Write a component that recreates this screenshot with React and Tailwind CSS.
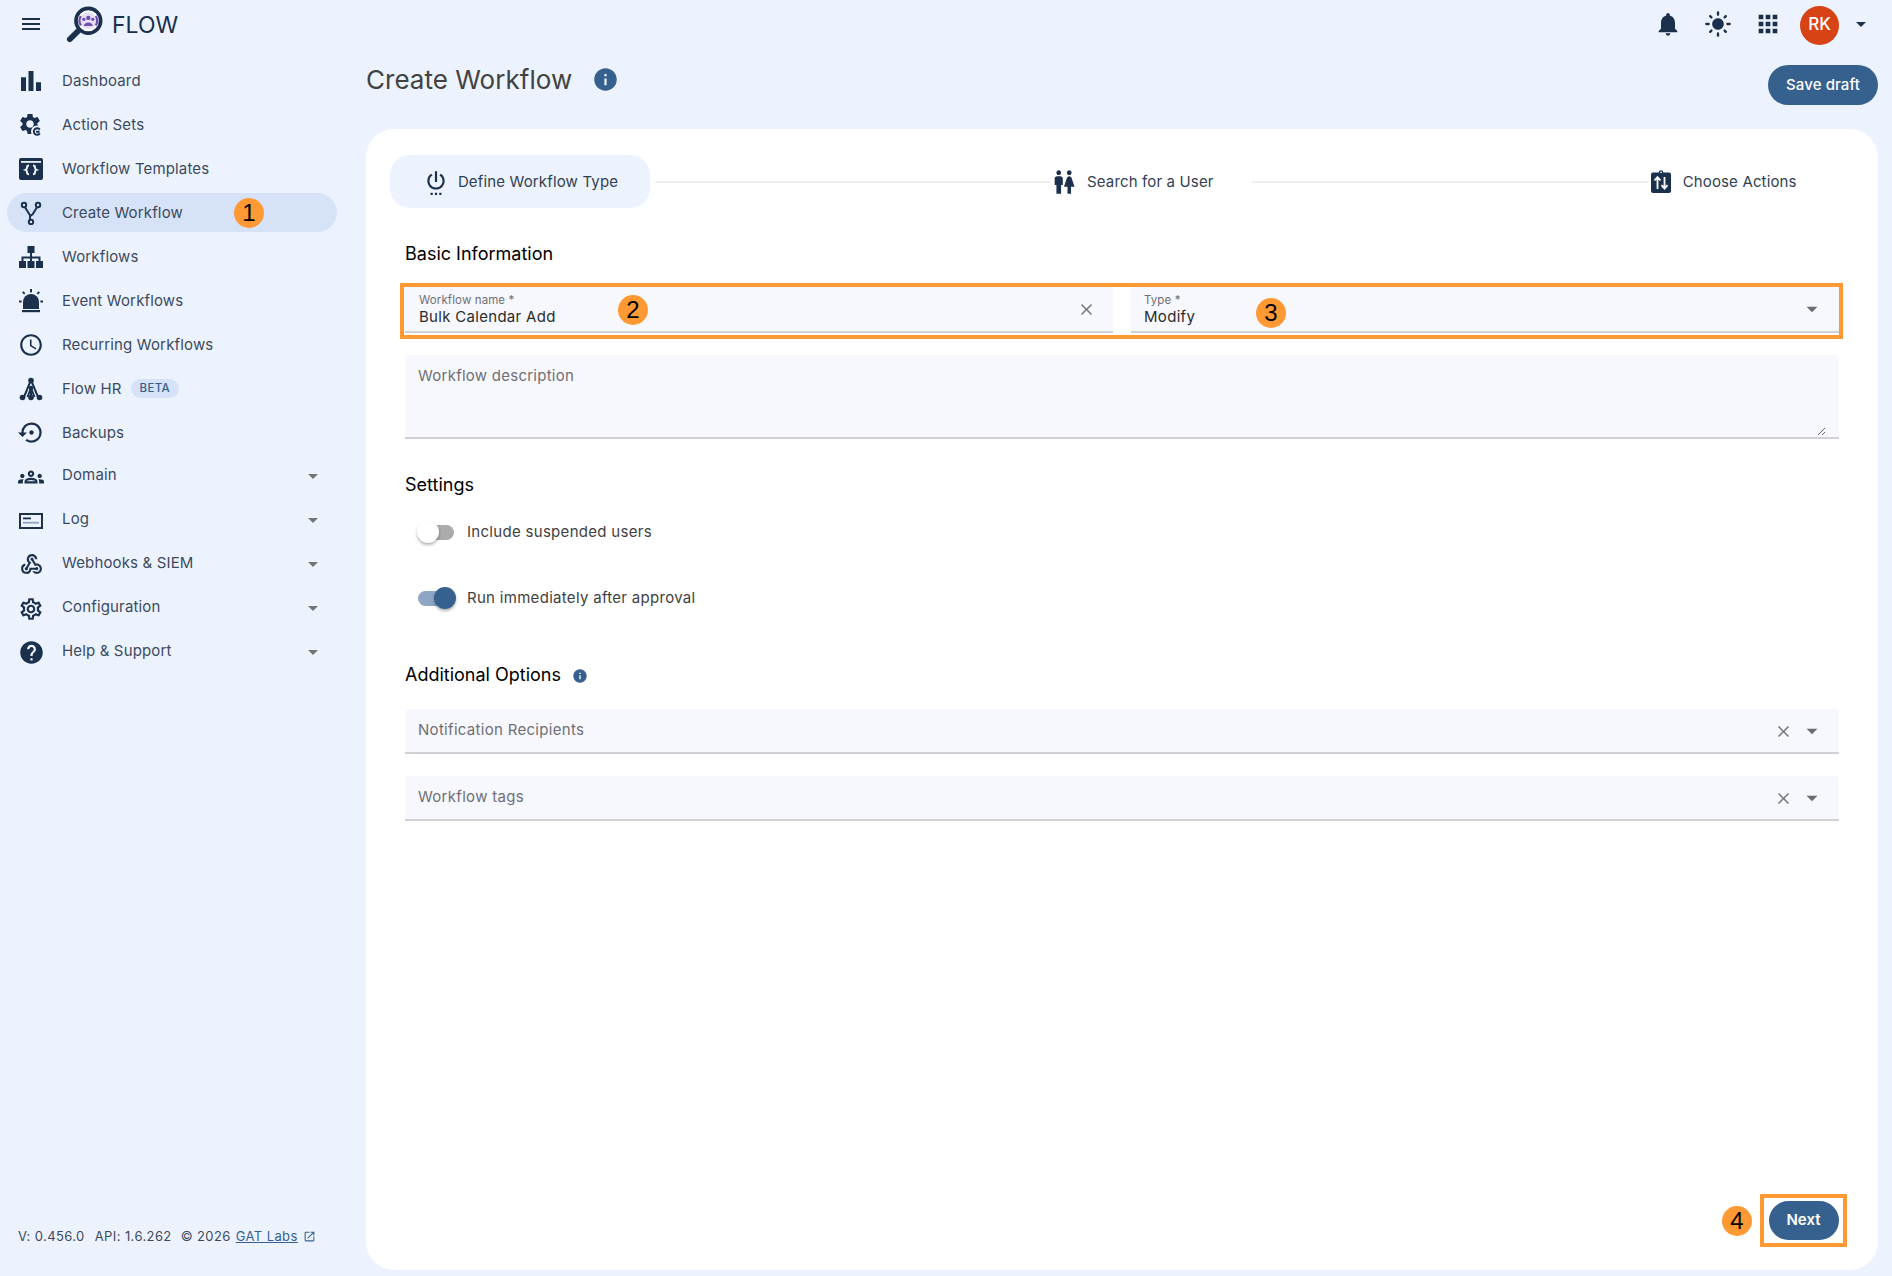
import React from "react";
import {
  MdMenu, MdBarChart, MdAccessTime, MdOutlineSettingsBackupRestore, MdOutlineGroups, MdOutlineWebhook,
  MdOutlineSettings, MdHelp, MdArrowDropDown, MdNotifications, MdLightMode, MdApps, MdInfo, MdSettingsPower,
  MdWc, MdClose, MdOpenInNew,
} from "react-icons/md";

const NAVY = "#1a304d";

function ActionSetsIcon(props) {
  return (
    <svg viewBox="0 0 24 24" {...props}>
      <g transform="translate(-1.6 -1.6) scale(1.05)"><path fill="currentColor" d="M19.14 12.94c.04-.3.06-.61.06-.94 0-.32-.02-.64-.07-.94l2.03-1.58c.18-.14.23-.41.12-.61l-1.92-3.32c-.12-.22-.37-.29-.59-.22l-2.39.96c-.5-.38-1.03-.7-1.62-.94l-.36-2.54c-.04-.24-.24-.41-.48-.41h-3.84c-.24 0-.43.17-.47.41l-.36 2.54c-.59.24-1.13.57-1.62.94l-2.39-.96c-.22-.08-.47 0-.59.22L2.74 8.87c-.12.21-.08.47.12.61l2.03 1.58c-.05.3-.09.63-.09.94s.02.64.07.94l-2.03 1.58c-.18.14-.23.41-.12.61l1.92 3.32c.12.22.37.29.59.22l2.39-.96c.5.38 1.03.7 1.62.94l.36 2.54c.05.24.24.41.48.41h3.84c.24 0 .44-.17.47-.41l.36-2.54c.59-.24 1.13-.56 1.62-.94l2.39.96c.22.08.47 0 .59-.22l1.92-3.32c.12-.22.07-.47-.12-.61l-2.01-1.58zM12 15.6c-1.98 0-3.6-1.62-3.6-3.6s1.62-3.6 3.6-3.6 3.6 1.62 3.6 3.6-1.62 3.6-3.6 3.6z" /></g>
      <circle cx="18" cy="18.5" r="6" fill="#ecf3fe" />
      <path d="M20.8 16.6a3.3 3.3 0 1 0 0 3.8M17 18.8h3.6" fill="none" stroke="currentColor" strokeWidth="1.9" />
    </svg>
  );
}

function TemplatesIcon(props) {
  return (
    <svg viewBox="0 0 24 24" {...props}>
      <rect x="0" y="1" width="24" height="22" rx="2" fill="currentColor" />
      <rect x="2" y="4" width="20" height="1.8" fill="#ecf3fe" />
      <path d="M10 8.5c-1.8 0-2 .8-2 2 0 1.3-.4 1.9-1.6 2.4 1.2.5 1.6 1.1 1.6 2.4 0 1.2.2 2 2 2M14 8.5c1.8 0 2 .8 2 2 0 1.3.4 1.9 1.6 2.4-1.2.5-1.6 1.1-1.6 2.4 0 1.2-.2 2-2 2" fill="none" stroke="#ecf3fe" strokeWidth="2" />
    </svg>
  );
}

function ForkIcon(props) {
  return (
    <svg viewBox="0 0 24 24" fill="none" stroke="currentColor" strokeWidth="2" {...props}>
      <circle cx="5" cy="4" r="2.2" />
      <circle cx="19" cy="4" r="2.2" />
      <circle cx="12" cy="21" r="2.2" />
      <path d="M6 6.2 11 14.2V18.8M18 6.2 13 14.2" />
      <path d="M11 14.2h2" />
    </svg>
  );
}

function SitemapIcon(props) {
  return (
    <svg viewBox="0 0 24 24" fill="currentColor" {...props}>
      <rect x="8.5" y="1" width="7" height="7" />
      <rect x="0" y="16" width="7" height="7" />
      <rect x="8.5" y="16" width="7" height="7" />
      <rect x="17" y="16" width="7" height="7" />
      <path d="M11 8h2v3.5h8.5V16h-2v-2.5H13V16h-2v-2.5H4.5V16h-2v-4.5H11z" />
    </svg>
  );
}

function SirenIcon(props) {
  return (
    <svg viewBox="0 0 24 24" fill="currentColor" {...props}>
      <path d="M4 20v-7a8 8 0 0 1 16 0v7z" />
      <rect x="3" y="21" width="18" height="2.2" />
      <rect x="11" y="0" width="2" height="3.4" />
      <rect x="0" y="11.5" width="2.6" height="2" />
      <rect x="21.4" y="11.5" width="2.6" height="2" />
      <path d="M3 3.6 4.4 2.2l2 2L5 5.6zM21 3.6 19.6 2.2l-2 2L19 5.6z" />
    </svg>
  );
}

function TreeIcon(props) {
  return (
    <svg viewBox="0 0 24 24" {...props}>
      <path d="M12 3 5 20M12 3l7 17M12 11v9M12 11l-3.5 9M12 11l3.5 9" fill="none" stroke="currentColor" strokeWidth="2" />
      <circle cx="12" cy="3.5" r="2.8" fill="currentColor" />
      <circle cx="12" cy="11" r="2.2" fill="currentColor" />
      <circle cx="3.5" cy="20.5" r="2.8" fill="currentColor" />
      <circle cx="12" cy="20.5" r="2.8" fill="currentColor" />
      <circle cx="20.5" cy="20.5" r="2.8" fill="currentColor" />
    </svg>
  );
}

function LogIcon(props) {
  return (
    <svg viewBox="0 0 24 24" {...props}>
      <rect x="1" y="5" width="22" height="14" fill="none" stroke="currentColor" strokeWidth="2" />
      <rect x="4" y="8.5" width="8" height="1.8" fill="currentColor" />
      <rect x="4" y="12.8" width="16" height="1.8" fill="#8fa3bb" />
    </svg>
  );
}

function ClipboardSwapIcon(props) {
  return (
    <svg viewBox="0 0 24 24" {...props}>
      <rect x="2" y="2.5" width="20" height="20.5" rx="2" fill="currentColor" />
      <circle cx="12" cy="2.4" r="2.2" fill="currentColor" />
      <circle cx="12" cy="2.4" r="0.8" fill="#fff" />
      <path d="M8.5 19V7.5M5.5 10.5l3-3.4 3 3.4M15.5 7v11.5M12.5 15.2l3 3.4 3-3.4" fill="none" stroke="#fff" strokeWidth="1.8" />
    </svg>
  );
}

function FlowLogo() {
  return (
    <svg viewBox="0 0 40 40" className="w-[38px] h-[38px] shrink-0">
      <path d="M12.5 26.5 4 35" stroke={NAVY} strokeWidth="6" strokeLinecap="round" />
      <circle cx="23.5" cy="15.5" r="13" fill="#fff" stroke={NAVY} strokeWidth="3.8" />
      <circle cx="23.5" cy="15.5" r="8.8" fill="#e6dff5" />
      <path d="M15.6 10.5a9.8 9.8 0 0 0 0 10M31.4 10.5a9.8 9.8 0 0 1 0 10" stroke="#6d4fb0" strokeWidth="2.4" fill="none" />
      <circle cx="23.5" cy="12.5" r="2.3" fill="#6d4fb0" />
      <circle cx="18.8" cy="14" r="1.7" fill="#6d4fb0" />
      <circle cx="28.2" cy="14" r="1.7" fill="#6d4fb0" />
      <path d="M18.8 21c0-5 9.4-5 9.4 0z" fill="#6d4fb0" />
    </svg>
  );
}

function Badge({ n, className = "" }) {
  return (
    <span className={`w-[30px] h-[30px] rounded-full bg-[#ff9933] text-black text-[24px] leading-none flex items-center justify-center font-['Liberation_Sans',sans-serif] shrink-0 ${className}`}>
      {n}
    </span>
  );
}

const navItems = [
  { label: "Dashboard", icon: MdBarChart, size: 30 },
  { label: "Action Sets", icon: ActionSetsIcon },
  { label: "Workflow Templates", icon: TemplatesIcon },
  { label: "Create Workflow", icon: ForkIcon, active: true },
  { label: "Workflows", icon: SitemapIcon },
  { label: "Event Workflows", icon: SirenIcon },
  { label: "Recurring Workflows", icon: MdAccessTime, size: 26 },
  { label: "Flow HR", icon: TreeIcon, beta: true },
  { label: "Backups", icon: MdOutlineSettingsBackupRestore, size: 27 },
  { label: "Domain", icon: MdOutlineGroups, size: 26, caret: true },
  { label: "Log", icon: LogIcon, caret: true },
  { label: "Webhooks & SIEM", icon: MdOutlineWebhook, size: 25, caret: true },
  { label: "Configuration", icon: MdOutlineSettings, size: 26, caret: true },
  { label: "Help & Support", icon: MdHelp, size: 27, caret: true },
];

function NavRow({ item }) {
  const Icon = item.icon;
  const size = item.size || 24;
  return (
    <div className={`relative h-[39px] ml-[7px] w-[330px] flex items-center rounded-full ${item.active ? "bg-[#d6e2f8]" : ""}`}>
      <span className="w-[48px] flex items-center justify-center text-[#1a304d] shrink-0">
        <Icon style={{ width: size, height: size }} className="text-[#1a304d]" />
      </span>
      <span className={`ml-[7px] text-[15px] tracking-[0.15px] text-[#3c4a5e] ${item.caret ? "-mt-[2px]" : "mt-[2px]"}`}>{item.label}</span>
      {item.beta && (
        <span className="ml-[9px] px-[9px] h-[19px] rounded-full bg-[#d6e2f8] text-[11.5px] font-medium tracking-[0.3px] text-[#36618e] flex items-center">BETA</span>
      )}
      {item.active && <Badge n="1" className="absolute left-[227px] top-[5px]" />}
      {item.caret && <MdArrowDropDown className="absolute right-[12px] top-[7px] w-[24px] h-[24px] text-[#757575]" />}
    </div>
  );
}

function Step({ icon: Icon, label, size = 24, iconClass = "" }) {
  return (
    <div className="flex items-center gap-[10px] shrink-0">
      <Icon style={{ width: size, height: size }} className={`text-[#1a304d] ${iconClass}`} />
      <span className="mt-[2px] text-[15px] tracking-[0.15px] text-[#303f52]">{label}</span>
    </div>
  );
}

function SectionTitle({ children }) {
  return <h2 className="text-[18px] leading-[24px] text-black">{children}</h2>;
}

function Toggle({ on, label }) {
  return (
    <div className="flex items-center h-[40px] ml-[12px]">
      <span className="relative w-[38px] h-[22px] flex items-center">
        <span className={`ml-[1px] w-[36px] h-[15px] rounded-full ${on ? "bg-[#8ea6c3]" : "bg-[#ababab]"}`} />
        <span className={`absolute top-0 w-[22px] h-[22px] rounded-full shadow-[0_2px_3px_rgba(0,0,0,0.3)] ${on ? "bg-[#36618e] left-[17px]" : "bg-white left-0"}`} />
      </span>
      <span className="ml-[12px] text-[15px] tracking-[0.3px] text-[#3f3f3f]">{label}</span>
    </div>
  );
}

function SelectField({ label }) {
  return (
    <div className="h-[45px] bg-[#f7f8fe] rounded-t-[4px] border-b-2 border-[#d0d0d6] flex items-center pl-[13px] pr-[14px]">
      <span className="flex-1 text-[15px] tracking-[0.3px] text-[#6f6f75]">{label}</span>
      <MdClose className="mt-[2px] w-[19px] h-[19px] text-[#77777d]" />
      <MdArrowDropDown className="ml-[6px] mt-[1px] w-[26px] h-[26px] text-[#6b6b70]" />
    </div>
  );
}

export default function App() {
  return (
    <div className="h-screen overflow-hidden bg-[#ecf3fe] flex flex-col font-['Inter',sans-serif]">
      {/* top bar */}
      <header className="h-[48px] shrink-0 flex items-center pl-[19px] pr-[19px]">
        <MdMenu className="w-[24px] h-[24px] text-[#1a304d]" />
        <span className="ml-[23px] mt-[1px]"><FlowLogo /></span>
        <span className="ml-[8px] mt-[2px] text-[23px] text-[#1a304d]">FLOW</span>
        <div className="ml-auto flex items-center">
          <MdNotifications className="w-[28px] h-[28px] text-[#1a304d]" />
          <MdLightMode className="ml-[22px] w-[28px] h-[28px] text-[#1a304d]" />
          <MdApps className="ml-[22px] w-[28px] h-[28px] text-[#1a304d]" />
          <span className="ml-[18px] mt-[2px] w-[39px] h-[39px] rounded-full bg-[#d84315] text-white text-[17px] font-medium flex items-center justify-center">RK</span>
          <MdArrowDropDown className="ml-[10px] w-[24px] h-[24px] text-[#1a304d]" />
        </div>
      </header>

      <div className="flex-1 flex min-h-0">
        {/* sidebar */}
        <aside className="w-[366px] shrink-0 flex flex-col pt-[13px]">
          <nav className="flex flex-col gap-[5px]">
            {navItems.map((item) => (
              <NavRow key={item.label} item={item} />
            ))}
          </nav>
          <div className="mt-auto mb-[30px] pl-[18px] flex items-center text-[13px] tracking-[0.4px] text-[#3c4a5e]">
            <span>V: 0.456.0</span>
            <span className="ml-[10px]">API: 1.6.262</span>
            <span className="ml-[9px]">© 2026</span>
            <span className="ml-[5px] text-[#36618e] underline">GAT Labs</span>
            <MdOpenInNew className="ml-[5px] w-[13px] h-[13px] text-[#36618e]" />
          </div>
        </aside>

        {/* main */}
        <main className="flex-1 min-w-0 flex flex-col pr-[14px] pb-[6px]">
          <div className="h-[81px] shrink-0 flex items-start">
            <h1 className="mt-[14px] text-[26px] leading-[36px] tracking-[0.03px] text-[#424242]">Create Workflow</h1>
            <MdInfo className="ml-[20px] mt-[18px] w-[27px] h-[27px] text-[#36618e]" />
            <button className="ml-auto mt-[17px] h-[40px] w-[110px] rounded-full bg-[#36618e] text-white text-[15px] font-medium tracking-[0.1px]">Save draft</button>
          </div>

          <section className="flex-1 min-h-0 bg-white rounded-[28px] flex flex-col pl-[24px] pr-[39px] pt-[26px] pb-[23px]">
            {/* stepper */}
            <div className="flex items-center h-[53px]">
              <div className="w-[260px] h-[53px] rounded-[20px] bg-[#ecf3fe] flex items-center justify-center shrink-0">
                <Step icon={MdSettingsPower} label="Define Workflow Type" size={26} iconClass="translate-x-[1px]" />
              </div>
              <div className="ml-[5px] w-[395px] h-[2px] bg-[#efefef]" />
              <Step icon={MdWc} label="Search for a User" size={28} iconClass="-mr-[1px]" />
              <div className="ml-[38px] w-[396px] h-[2px] bg-[#efefef]" />
              <div className="ml-[1px]"><Step icon={ClipboardSwapIcon} label="Choose Actions" size={24} /></div>
            </div>

            <div className="pl-[15px] flex-1 flex flex-col min-h-0">
              <div className="mt-[34px]"><SectionTitle>Basic Information</SectionTitle></div>

              {/* highlighted row */}
              <div className="mt-[17px] -ml-[5px] -mr-[4px] h-[56px] border-[4px] border-[#ff9933] pl-[1px] flex gap-[18px]">
                <div className="w-[708px] h-[46px] bg-[#f7f8fe] border-b-2 border-[#d0d0d6] pl-[14px] pr-[17px] flex items-center">
                  <div className="w-[199px] pt-[2px] flex flex-col">
                    <span className="text-[11.5px] leading-[14px] tracking-[0.1px] text-[#6f6f75]">Workflow name *</span>
                    <span className="text-[15px] leading-[20px] tracking-[0.3px] text-[#2b2b2b]">Bulk Calendar Add</span>
                  </div>
                  <Badge n="2" className="mt-[2px]" />
                  <MdClose className="ml-auto mt-[1px] w-[19px] h-[19px] text-[#77777d]" />
                </div>
                <div className="flex-1 h-[46px] bg-[#f7f8fe] border-b-2 border-[#d0d0d6] pl-[13px] pr-[14px] flex items-center">
                  <div className="w-[112px] pt-[2px] flex flex-col">
                    <span className="text-[11.5px] leading-[14px] tracking-[0.1px] text-[#6f6f75]">Type *</span>
                    <span className="text-[15px] leading-[20px] tracking-[0.3px] text-[#2b2b2b]">Modify</span>
                  </div>
                  <Badge n="3" className="mt-[8px]" />
                  <MdArrowDropDown className="ml-auto w-[26px] h-[26px] text-[#6b6b70]" />
                </div>
              </div>

              <div className="mt-[16px] h-[84px] bg-[#f7f8fe] rounded-t-[4px] border-b-2 border-[#d0d0d6] pl-[13px] pr-[13px] pt-[10px] pb-[1px]">
                <textarea
                  placeholder="Workflow description"
                  className="block h-full w-full bg-transparent text-[15px] tracking-[0.25px] placeholder:text-[#6f6f75] outline-none"
                />
              </div>

              <div className="mt-[34px]"><SectionTitle>Settings</SectionTitle></div>
              <div className="mt-[15px]"><Toggle label="Include suspended users" /></div>
              <div className="mt-[26px]"><Toggle on label="Run immediately after approval" /></div>

              <div className="mt-[45px] flex items-center">
                <SectionTitle>Additional Options</SectionTitle>
                <MdInfo className="ml-[11px] mt-[1px] w-[16px] h-[16px] text-[#36618e]" />
              </div>
              <div className="mt-[22px]"><SelectField label="Notification Recipients" /></div>
              <div className="mt-[22px]"><SelectField label="Workflow tags" /></div>

              <div className="mt-auto flex items-center justify-end">
                <Badge n="4" className="mr-[8px]" />
                <div className="-mr-[8px] w-[87px] h-[53px] border-[4px] border-[#ff9933] flex items-center justify-center">
                  <button className="w-[70px] h-[39px] rounded-full bg-[#36618e] text-white text-[15px] font-semibold">Next</button>
                </div>
              </div>
            </div>
          </section>
        </main>
      </div>
    </div>
  );
}
